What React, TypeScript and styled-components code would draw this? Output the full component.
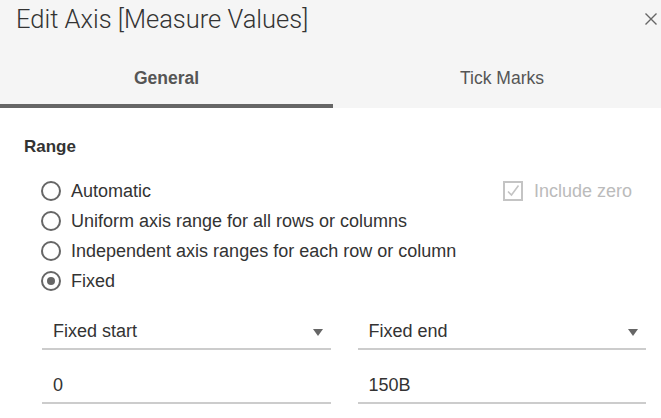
import React from "react";
import styled, { createGlobalStyle } from "styled-components";

const Global = createGlobalStyle`
  html, body { margin: 0; padding: 0; background: #ffffff; }
  body { font-family: "Liberation Sans", Arial, sans-serif; color: #333333; }
  #root { width: 661px; min-height: 418px; }
  * { box-sizing: border-box; }
`;

const Dialog = styled.div`
  width: 661px;
  height: 418px;
  background: #ffffff;
  display: flex;
  flex-direction: column;
  overflow: hidden;
`;

const Header = styled.div`
  background: #f5f5f5;
  display: flex;
  flex-direction: column;
`;

const TitleRow = styled.div`
  height: 38px;
  display: flex;
  align-items: center;
  justify-content: space-between;
  padding: 0 0 0 16px;
`;

const Title = styled.h1`
  margin: 0;
  font-family: Roboto, "Liberation Sans", sans-serif;
  font-weight: 300;
  font-size: 25.5px;
  line-height: 38px;
  color: #333333;
`;

const CloseButton = styled.button`
  border: 0;
  background: transparent;
  padding: 0;
  width: 16px;
  height: 16px;
  margin: 0 2px 0 0;
  display: flex;
  align-items: center;
  justify-content: center;
  color: #666666;
  cursor: pointer;
`;

const Tabs = styled.div`
  display: grid;
  grid-template-columns: 333px 1fr;
`;

const Tab = styled.div<{ $active?: boolean }>`
  height: 70px;
  padding-top: 31px;
  padding-left: ${(p) => (p.$active ? 0 : 10)}px;
  text-align: center;
  font-family: "Liberation Sans", Arial, sans-serif;
  font-size: 17.5px;
  line-height: 18px;
  font-weight: ${(p) => (p.$active ? 700 : 400)};
  color: #555555;
  border-bottom: 4px solid ${(p) => (p.$active ? "#666666" : "transparent")};
`;

const Body = styled.div`
  flex: 1;
  padding: 30px 0 0 0;
`;

const SectionTitle = styled.h2`
  margin: 0 0 20px 24px;
  font-size: 17px;
  line-height: 18px;
  font-weight: 700;
  color: #333333;
`;

const OptionList = styled.div`
  display: flex;
  flex-direction: column;
  padding: 0 29px 0 41px;
`;

const OptionRow = styled.div`
  height: 30px;
  display: flex;
  align-items: center;
  justify-content: space-between;
`;

const RadioLabel = styled.label`
  display: flex;
  align-items: center;
  gap: 10px;
  font-size: 18px;
  color: #333333;
`;

const RadioCircle = styled.span<{ $checked?: boolean }>`
  width: 20px;
  height: 20px;
  border-radius: 50%;
  border: 2px solid #666666;
  display: flex;
  align-items: center;
  justify-content: center;
  flex: none;
  &::after {
    content: "";
    width: 8px;
    height: 8px;
    border-radius: 50%;
    background: ${(p) => (p.$checked ? "#666666" : "transparent")};
  }
`;

const CheckLabel = styled.label`
  display: flex;
  align-items: center;
  gap: 11px;
  font-size: 18px;
  color: #bbbbbb;
`;

const CheckBox = styled.span`
  width: 20px;
  height: 20px;
  border: 2px solid #c4c4c4;
  display: flex;
  align-items: center;
  justify-content: center;
  flex: none;
`;

const FieldGrid = styled.div`
  display: grid;
  grid-template-columns: 1fr 1fr;
  column-gap: 27px;
  row-gap: 16px;
  padding: 0 15px 0 42px;
  margin-top: 16px;
`;

const Field = styled.div`
  height: 38px;
  border-bottom: 2px solid #cccccc;
  display: flex;
  align-items: center;
  justify-content: space-between;
  padding: 2px 8px 0 11px;
  font-size: 18px;
  color: #333333;
`;

const Caret = styled.span`
  width: 0;
  height: 0;
  border-left: 5.5px solid transparent;
  border-right: 5.5px solid transparent;
  border-top: 7px solid #666666;
  margin-top: 2px;
`;

const options = [
  "Automatic",
  "Uniform axis range for all rows or columns",
  "Independent axis ranges for each row or column",
  "Fixed",
];

export default function App() {
  return (
    <Dialog>
      <Global />
      <Header>
        <TitleRow>
          <Title>Edit Axis [Measure Values]</Title>
          <CloseButton aria-label="Close">
            <svg width="12" height="12" viewBox="0 0 12 12">
              <path d="M0.5 0.5 L11.5 11.5 M11.5 0.5 L0.5 11.5" stroke="#666" strokeWidth="1.4" />
            </svg>
          </CloseButton>
        </TitleRow>
        <Tabs>
          <Tab $active>General</Tab>
          <Tab>Tick Marks</Tab>
        </Tabs>
      </Header>
      <Body>
        <SectionTitle>Range</SectionTitle>
        <OptionList>
          {options.map((o, i) => (
            <OptionRow key={o}>
              <RadioLabel>
                <RadioCircle $checked={i === 3} />
                {o}
              </RadioLabel>
              {i === 0 && (
                <CheckLabel>
                  <CheckBox>
                    <svg width="14" height="14" viewBox="0 0 14 14">
                      <path d="M2 7.5 L5.5 11 L12.5 1.5" fill="none" stroke="#c4c4c4" strokeWidth="1.6" />
                    </svg>
                  </CheckBox>
                  Include zero
                </CheckLabel>
              )}
            </OptionRow>
          ))}
        </OptionList>
        <FieldGrid>
          <Field>
            Fixed start
            <Caret />
          </Field>
          <Field>
            Fixed end
            <Caret />
          </Field>
          <Field>0</Field>
          <Field>150B</Field>
        </FieldGrid>
      </Body>
    </Dialog>
  );
}
